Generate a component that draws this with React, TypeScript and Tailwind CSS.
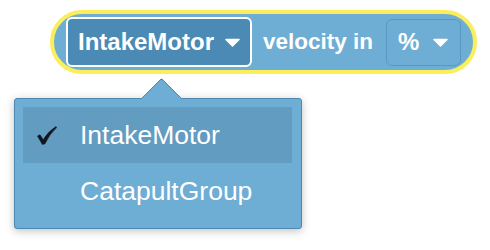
import { useState } from 'react'

const options = ['IntakeMotor', 'CatapultGroup']

function Caret() {
  return (
    <svg width="15" height="9" viewBox="0 0 15 9" className="shrink-0">
      <path d="M1 1.5 L14 1.5 L7.5 8 Z" fill="white" stroke="white" strokeWidth="1.5" strokeLinejoin="round" />
    </svg>
  )
}

function Check() {
  return (
    <svg width="20" height="19" viewBox="0 0 20 19">
      <path d="M0.5 10 L3 8.8 L6.2 13.8 Q11 5.5 19 0.6 L19.6 1.6 Q12.5 8 8 17.8 L5.4 18.4 Z" fill="#10161d" stroke="#10161d" strokeWidth="0.6" strokeLinejoin="round" />
    </svg>
  )
}

export default function App() {
  const [selected] = useState('IntakeMotor')

  return (
    <div className="relative w-[490px] h-[250px] bg-white overflow-hidden font-['Liberation_Sans',Arial,sans-serif]">
      <div className="pt-[10px] pl-[50px]">
        <div className="flex items-center w-[427px] h-[64px] rounded-full border-4 border-[#fbee5a] bg-[#6eadd4] pl-[12px] pr-[12px]">
          <div className="flex items-center justify-between w-[186px] h-[50px] rounded-[6px] border-2 border-white bg-[#4a8ab5] pl-[10px] pr-[10px]">
            <span className="text-white font-bold text-[24px] leading-none">{selected}</span>
            <Caret />
          </div>
          <span className="ml-[11px] text-white font-bold text-[22.5px] leading-none">velocity in</span>
          <div className="ml-auto flex items-center justify-between w-[75px] h-[47px] rounded-[6px] border border-[#5a98c3] bg-[#6eadd4] pl-[11px] pr-[12px]">
            <span className="text-white font-bold text-[24px] leading-none">%</span>
            <Caret />
          </div>
        </div>
      </div>

      <div className="absolute left-[14px] top-[98px] w-[288px] h-[131px]">
        <div className="h-full rounded-[3px] border border-[#4e88b1] bg-[#6eadd4] shadow-[0_2px_8px_rgba(0,0,0,0.25)] pt-[8px] pl-[8px] pr-[9px]">
          {options.map(o => (
            <div
              key={o}
              className={`flex items-center h-[56px] ${o === selected ? 'bg-[#629cc0]' : ''}`}
            >
              <span className="flex items-center w-[57px] pl-[14px]">
                {o === selected && <Check />}
              </span>
              <span className="text-white text-[26.5px] leading-none">{o}</span>
            </div>
          ))}
        </div>
        <div className="absolute left-[123px] top-[-21px] w-[48px] h-[22px] overflow-hidden">
          <div className="absolute left-[8.5px] top-[6.5px] w-[31px] h-[31px] rotate-45 rounded-tl-[3px] bg-[#6eadd4] border-l border-t border-[#4e88b1]" />
        </div>
      </div>
    </div>
  )
}
